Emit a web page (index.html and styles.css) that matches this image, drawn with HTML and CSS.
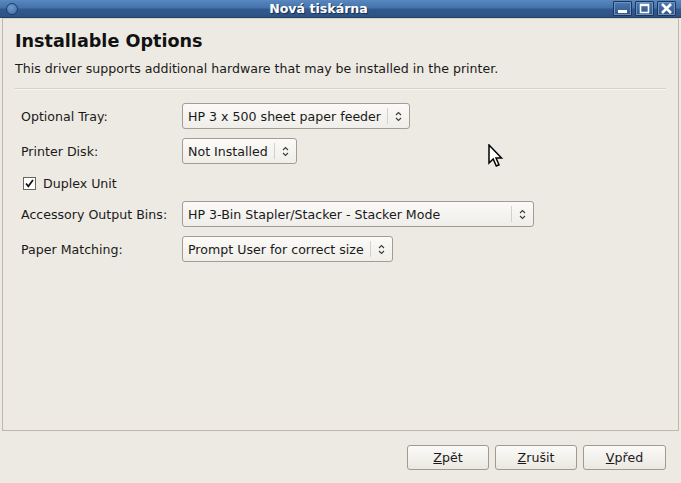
FILE: index.html
```html
<!DOCTYPE html>
<html>
<head>
<meta charset="utf-8">
<link rel="stylesheet" href="styles.css">
</head>
<body>
<div class="window">
  <div class="titlebar">
    <span class="menu-dot"></span>
    <span class="title">Nová tiskárna</span>
    <div class="wm-buttons">
      <span class="wm-btn"><svg width="19" height="15" viewBox="0 0 19 15"><rect x="5" y="9" width="9" height="3" fill="#fff"/></svg></span>
      <span class="wm-btn"><svg width="19" height="15" viewBox="0 0 19 15"><rect x="5.5" y="3.5" width="8" height="8" fill="none" stroke="#fff" stroke-width="1.6"/><rect x="5" y="3" width="9" height="2.2" fill="#fff"/></svg></span>
      <span class="wm-btn"><svg width="19" height="15" viewBox="0 0 19 15"><path d="M5 3 L14 12 M14 3 L5 12" stroke="#fff" stroke-width="2.6"/></svg></span>
    </div>
  </div>
  <div class="frame">
    <h1 class="heading">Installable Options</h1>
    <p class="desc">This driver supports additional hardware that may be installed in the printer.</p>
    <div class="sep"></div>
    <div class="options">
      <div class="row">
        <span class="label">Optional Tray:</span>
        <div class="combo"><span class="combo-text">HP 3 x 500 sheet paper feeder</span><span class="combo-arrow"><svg width="7" height="11" viewBox="0 0 7 11"><path d="M1 4 L3.5 1.5 L6 4 M1 7 L3.5 9.5 L6 7" fill="none" stroke="#3c3c3c" stroke-width="1.1"/></svg></span></div>
      </div>
      <div class="row">
        <span class="label">Printer Disk:</span>
        <div class="combo"><span class="combo-text">Not Installed</span><span class="combo-arrow"><svg width="7" height="11" viewBox="0 0 7 11"><path d="M1 4 L3.5 1.5 L6 4 M1 7 L3.5 9.5 L6 7" fill="none" stroke="#3c3c3c" stroke-width="1.1"/></svg></span></div>
      </div>
      <div class="check-row">
        <span class="checkbox"><svg width="11" height="11" viewBox="0 0 11 11"><path d="M2 5.5 L4.3 8.3 L9 2" fill="none" stroke="#111" stroke-width="1.7"/></svg></span>
        <span class="check-label">Duplex Unit</span>
      </div>
      <div class="row">
        <span class="label">Accessory Output Bins:</span>
        <div class="combo wide"><span class="combo-text">HP 3-Bin Stapler/Stacker - Stacker Mode</span><span class="combo-arrow"><svg width="7" height="11" viewBox="0 0 7 11"><path d="M1 4 L3.5 1.5 L6 4 M1 7 L3.5 9.5 L6 7" fill="none" stroke="#3c3c3c" stroke-width="1.1"/></svg></span></div>
      </div>
      <div class="row">
        <span class="label">Paper Matching:</span>
        <div class="combo"><span class="combo-text">Prompt User for correct size</span><span class="combo-arrow"><svg width="7" height="11" viewBox="0 0 7 11"><path d="M1 4 L3.5 1.5 L6 4 M1 7 L3.5 9.5 L6 7" fill="none" stroke="#3c3c3c" stroke-width="1.1"/></svg></span></div>
      </div>
    </div>
  </div>
  <div class="actions">
    <button class="btn"><u>Z</u>pět</button>
    <button class="btn"><u>Z</u>rušit</button>
    <button class="btn last"><u>V</u>před</button>
  </div>
  <svg class="cursor" width="16" height="26" viewBox="0 0 16 26"><path d="M1 1 L1 19 L5.2 15 L8.3 22 L11 20.8 L8 14 L13.5 14 Z" fill="#fff" stroke="#000" stroke-width="1.5" stroke-linejoin="miter"/></svg>
</div>
</body>
</html>
```

FILE: styles.css
```css
html, body {
  margin: 0;
  padding: 0;
}
body {
  background: #edeae3;
  font-family: "DejaVu Sans", sans-serif;
  font-size: 12.6px;
  color: #1a1a1a;
}
.window {
  position: relative;
  width: 681px;
  height: 483px;
  background: #edeae3;
  display: flex;
  flex-direction: column;
  overflow: hidden;
}
.titlebar {
  height: 18px;
  flex: none;
  display: flex;
  align-items: center;
  background: linear-gradient(#5a88bf 0%, #4273ad 45%, #33598c 55%, #2d5183 100%);
  border-bottom: 1px solid #243f66;
  box-sizing: border-box;
  padding-left: 6px;
}
.menu-dot {
  width: 10px;
  height: 10px;
  border-radius: 50%;
  border: 1px solid #233c60;
  background: radial-gradient(circle at 40% 35%, #6f9ad0, #3e6aa2);
  flex: none;
}
.title {
  flex: 1;
  text-align: center;
  color: #fff;
  font-weight: bold;
  font-size: 12.6px;
  text-shadow: 1px 1px 0 #1c2f4c;
  padding-left: 6px;
}
.wm-buttons {
  display: flex;
  gap: 3px;
  padding-right: 5px;
}
.wm-btn {
  width: 19px;
  height: 15px;
  box-sizing: border-box;
  border: 1px solid #1f3558;
  border-radius: 1px;
  box-shadow: inset 0 0 0 1px #6d93c4;
  background: linear-gradient(#4a79b3, #2f5588);
  display: flex;
}
.wm-btn svg { display: block; margin: -1px; }
.frame {
  height: 413px;
  flex: none;
  margin: 0 2px;
  border: 1px solid #bfb8aa;
  border-top-color: #d8d3ca;
  box-sizing: border-box;
  padding: 0 12px;
}
.heading {
  margin: 12px 0 0 0;
  font-size: 17.6px;
  line-height: 20px;
  font-weight: bold;
  color: #111;
}
.desc {
  margin: 10px 0 0 0;
  line-height: 15px;
}
.sep {
  margin-top: 12px;
  height: 0;
  border-top: 1px solid #d6d1c7;
  border-bottom: 1px solid #f7f6f2;
}
.options {
  display: flex;
  flex-direction: column;
  padding: 13px 0 0 6px;
  gap: 9px;
}
.row {
  display: grid;
  grid-template-columns: 161px auto;
  justify-content: start;
  align-items: center;
  height: 26px;
}
.combo {
  height: 26px;
  box-sizing: border-box;
  border: 1px solid #a29c92;
  border-radius: 3px;
  background: linear-gradient(#fbfaf8, #f0eee9);
  display: flex;
  align-items: center;
  justify-self: start;
}
.combo.wide { width: 352px; }
.combo-text {
  flex: 1;
  padding: 0 6px 0 5px;
  white-space: nowrap;
}
.combo-arrow {
  height: 16px;
  border-left: 1px solid #d5d0c8;
  padding: 0 7px 0 7px;
  display: flex;
  align-items: center;
}
.check-row {
  display: flex;
  align-items: center;
  height: 13px;
  margin: 4px 0 2px 2px;
}
.checkbox {
  width: 13px;
  height: 13px;
  box-sizing: border-box;
  border: 1px solid #6a665f;
  background: #fff;
  display: flex;
  align-items: center;
  justify-content: center;
}
.check-label {
  margin-left: 7px;
}
.actions {
  flex: 1;
  display: flex;
  justify-content: flex-end;
  align-items: flex-start;
  gap: 6px;
  padding: 14px 15px 0 0;
}
.btn {
  font-family: "DejaVu Sans", sans-serif;
  font-size: 12.6px;
  color: #1a1a1a;
  width: 82px;
  height: 25px;
  border: 1px solid #a09a90;
  border-radius: 3px;
  background: linear-gradient(#fbfaf8, #ebe8e1);
  padding: 0;
}
.btn.last { width: 83px; }
.cursor {
  position: absolute;
  left: 488px;
  top: 144px;
}
```
